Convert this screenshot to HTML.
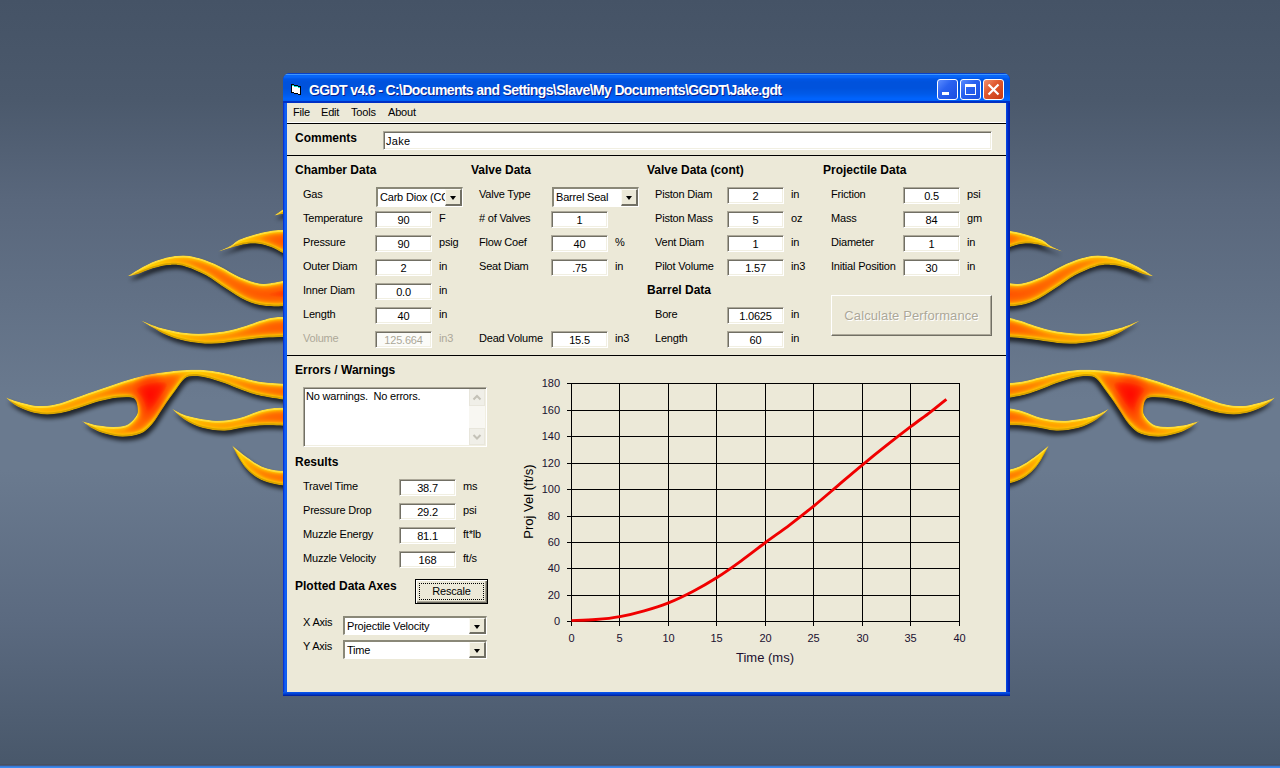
<!DOCTYPE html><html><head><meta charset="utf-8"><style>
html,body{margin:0;padding:0}
body{width:1280px;height:768px;overflow:hidden;position:relative;
background:linear-gradient(to bottom,#455366 0px,#4b596c 100px,#59677c 200px,#6a7a8f 400px,#6a7a8f 470px,#5b6a80 620px,#49586b 760px);
font-family:"Liberation Sans",sans-serif}
#taskbar{position:absolute;left:0;top:764px;width:1280px;height:4px;background:linear-gradient(to bottom,#4a505e 0px,#4a505e 1px,#425a84 1px,#425a84 2px,#3a7cd8 2px,#3a7cd8 3px,#3a8bf0 3px)}
#flames{position:absolute;left:0;top:0}
#win{position:absolute;left:283px;top:73px;width:727px;height:623px;border-radius:7px 7px 0 0;overflow:hidden;
background:linear-gradient(to right,#0019c0 0px,#0a4ee8 1px,#1466f4 3px,#0a50e8 4px,#0a50e8 723px,#0038d8 724px,#0020b0 726px)}
#wbot{position:absolute;left:0;top:619px;width:727px;height:4px;background:linear-gradient(to bottom,#0a56f0 0px,#0040d0 2px,#001a98 4px)}
#title{position:absolute;left:0;top:0;width:727px;height:30px;
background:linear-gradient(to bottom,#0841c8 0px,#0841c8 1px,#3d95ff 1px,#3d95ff 2px,#0866f8 2px,#0866f8 4px,#0056e6 6px,#0052dc 9px,#0052dc 15px,#005ae8 21px,#0064ff 26px,#0060f2 28px,#0030c4 28px,#0030c4 30px)}
#client{position:absolute;left:287px;top:103px;width:719px;height:589px;background:#ece9d8}
.t{position:absolute;font-size:11px;line-height:13px;letter-spacing:-0.2px;color:#000;white-space:nowrap}
.h{position:absolute;font-size:12px;line-height:13px;font-weight:bold;color:#000;white-space:nowrap}
.box{position:absolute;box-sizing:border-box;background:#fff;border-top:1px solid #aca899;border-left:1px solid #aca899;border-right:1px solid #fff;border-bottom:1px solid #fff;box-shadow:inset 1px 1px 0 #716f64,inset -1px -1px 0 #f1efe2;
font-size:11px;line-height:16px;letter-spacing:-0.2px;text-align:center;white-space:nowrap;overflow:hidden}
.dis{color:#aca899}
.combo{position:absolute;box-sizing:border-box;background:#fff;border-top:2px solid #8a8878;border-left:2px solid #8a8878;border-right:1px solid #fff;border-bottom:1px solid #fff;
font-size:11px;line-height:17px;letter-spacing:-0.2px;white-space:nowrap;overflow:hidden;padding-left:2px}
.cbtn{position:absolute;top:0;right:0;width:17px;bottom:0;box-sizing:border-box;background:#ece9d8;border-top:1px solid #fbfaf4;border-left:1px solid #fbfaf4;border-right:2px solid #716f64;border-bottom:2px solid #716f64}
.cbtn:after{content:"";position:absolute;left:4px;top:6px;border-left:3.5px solid transparent;border-right:3.5px solid transparent;border-top:4px solid #000}
.tbtn{position:absolute;top:6px;width:21px;height:21px;box-sizing:border-box;border:1px solid #fff;border-radius:3px;
background:linear-gradient(135deg,#5a8cff 0%,#2a62f0 40%,#1a4ee0 100%)}
.line{position:absolute;height:1px;background:#000}
</style></head><body>
<svg id="flames" width="1280" height="768" style="position:absolute;left:0;top:0"><defs><filter id="fl" x="-20%" y="-40%" width="140%" height="180%" color-interpolation-filters="sRGB"><feGaussianBlur in="SourceAlpha" stdDeviation="3" result="b1"/><feComponentTransfer in="b1" result="mid"><feFuncA type="linear" slope="2.8" intercept="-1.85"/></feComponentTransfer><feFlood flood-color="#ff8a00"/><feComposite in2="mid" operator="in" result="orange"/><feGaussianBlur in="SourceAlpha" stdDeviation="6" result="b2"/><feComponentTransfer in="b2" result="deep"><feFuncA type="linear" slope="3" intercept="-2.0"/></feComponentTransfer><feFlood flood-color="#ff5200"/><feComposite in2="deep" operator="in" result="deepor"/><feGaussianBlur in="SourceAlpha" stdDeviation="8" result="b3"/><feComponentTransfer in="b3" result="core"><feFuncA type="linear" slope="8" intercept="-6.9"/></feComponentTransfer><feFlood flood-color="#ff1000"/><feComposite in2="core" operator="in" result="red"/><feOffset in="SourceAlpha" dx="0" dy="-2" result="up"/><feComposite in="SourceAlpha" in2="up" operator="out" result="brim0"/><feGaussianBlur in="brim0" stdDeviation="0.7" result="brim1"/><feFlood flood-color="#b07a00" flood-opacity="0.5"/><feComposite in2="brim1" operator="in" result="brim"/><feOffset in="SourceAlpha" dx="0" dy="1.5" result="dn"/><feComposite in="SourceAlpha" in2="dn" operator="out" result="trim0"/><feGaussianBlur in="trim0" stdDeviation="0.6" result="trim1"/><feFlood flood-color="#ffe860" flood-opacity="0.6"/><feComposite in2="trim1" operator="in" result="trim"/><feMerge result="m"><feMergeNode in="SourceGraphic"/><feMergeNode in="orange"/><feMergeNode in="deepor"/><feMergeNode in="red"/><feMergeNode in="brim"/><feMergeNode in="trim"/></feMerge><feComposite in="m" in2="SourceAlpha" operator="in" result="fill"/><feGaussianBlur in="SourceAlpha" stdDeviation="2" result="sb"/><feOffset in="sb" dx="2" dy="3.5" result="so"/><feComponentTransfer in="so" result="sh"><feFuncA type="linear" slope="0.7"/></feComponentTransfer><feMerge><feMergeNode in="sh"/><feMergeNode in="fill"/></feMerge></filter></defs><g filter="url(#fl)" fill="#ffcc00"><path d="M274.3 215.6 C275.8 214.6 280.4 211.0 283.0 209.6 C285.6 208.2 288.8 207.8 290.0 207.4 L340 207.4 L340 214.5 L290.0 214.5 C288.8 214.4 285.6 213.8 283.0 214.0 C280.4 214.2 275.8 215.3 274.3 215.6 Z"/><path d="M218.0 251.6 C220.2 250.6 227.5 247.6 231.0 245.6 C234.5 243.6 235.1 241.7 239.0 239.8 C242.9 237.9 249.5 235.9 254.7 234.4 C259.9 232.9 264.4 231.7 270.3 230.9 C276.2 230.1 286.7 229.8 290.0 229.6 L340 229.6 L340 253.6 L290.0 253.6 C288.8 253.5 285.6 254.0 283.0 253.1 C280.4 252.2 277.6 249.8 274.2 248.4 C270.8 247.0 266.0 245.3 262.5 244.5 C259.0 243.7 256.2 243.4 253.0 243.4 C249.8 243.4 246.6 243.8 243.0 244.5 C239.4 245.2 235.4 246.5 231.2 247.7 C227.1 248.9 220.2 250.9 218.0 251.6 Z"/><path d="M127.3 276.2 C130.5 274.3 140.1 268.0 146.6 264.9 C153.1 261.8 160.3 259.2 166.5 257.6 C172.7 256.0 178.2 255.3 183.7 255.4 C189.2 255.5 193.7 256.5 199.7 258.3 C205.7 260.1 213.0 263.1 219.6 266.2 C226.2 269.3 232.9 274.0 239.5 276.9 C246.1 279.8 253.9 282.5 259.4 283.5 C264.9 284.5 267.6 283.5 272.7 282.8 C277.8 282.1 287.1 280.1 290.0 279.5 L340 279.5 L340 306.0 L290.0 306.0 C286.0 306.0 273.3 307.0 266.0 306.1 C258.7 305.2 252.8 303.7 246.2 300.8 C239.6 297.9 232.8 293.0 226.2 288.8 C219.5 284.6 212.9 279.1 206.3 275.5 C199.7 271.9 192.4 268.7 186.4 266.9 C180.4 265.1 176.0 264.7 170.5 264.9 C165.0 265.1 158.7 266.6 153.2 268.2 C147.7 269.8 141.6 272.9 137.3 274.2 C133.0 275.5 129.0 275.9 127.3 276.2 Z"/><path d="M140.0 320.0 C143.5 321.4 153.5 325.9 161.2 328.1 C169.0 330.3 177.9 332.3 186.2 333.1 C194.6 333.9 202.9 333.8 211.2 333.1 C219.6 332.4 227.9 330.8 236.2 328.8 C244.6 326.7 255.0 322.5 261.2 320.6 C267.5 318.7 269.0 318.1 273.8 317.5 C278.5 316.9 287.3 316.9 290.0 316.8 L340 316.8 L340 336.8 L290.0 336.8 C285.2 337.0 270.2 337.4 261.2 338.1 C252.3 338.8 244.6 340.3 236.2 341.2 C227.9 342.2 219.6 343.8 211.2 343.8 C202.9 343.8 193.5 342.6 186.2 341.2 C179.0 339.9 173.1 337.9 167.5 335.6 C161.9 333.3 157.1 330.1 152.5 327.5 C147.9 324.9 142.1 321.2 140.0 320.0 Z"/><path d="M5.9 397.5 C7.9 398.2 12.7 400.2 17.6 401.6 C22.5 403.0 29.4 405.1 35.2 405.7 C41.1 406.3 46.9 406.1 52.7 405.1 C58.6 404.1 63.5 402.1 70.3 399.8 C77.1 397.6 85.6 394.3 93.4 391.6 C101.2 388.9 109.1 385.9 116.9 383.4 C124.7 380.9 132.5 378.2 140.3 376.4 C148.1 374.5 155.9 373.4 163.8 372.3 C171.6 371.2 180.1 370.3 187.2 370.0 C194.3 369.7 200.2 369.8 206.5 370.3 C212.8 370.8 218.6 371.9 224.7 373.2 C230.8 374.4 236.9 376.3 243.0 377.8 C249.1 379.3 253.4 381.0 261.2 382.0 C269.0 383.0 285.2 383.7 290.0 384.0 L340 384.0 L340 400.5 L290.0 400.5 C285.2 399.8 269.0 397.6 261.2 396.0 C253.4 394.4 249.1 392.7 243.0 390.6 C236.9 388.5 230.8 385.4 224.7 383.3 C218.6 381.2 211.7 379.0 206.5 377.8 C201.3 376.6 197.3 375.9 193.7 376.0 C190.0 376.1 187.6 376.3 184.6 378.7 C181.6 381.1 179.0 385.8 175.5 390.5 C172.0 395.2 167.7 401.2 163.8 406.9 C159.8 412.6 155.9 420.0 152.0 424.5 C148.1 429.0 145.2 431.8 140.3 433.8 C135.4 435.9 128.6 436.8 122.7 436.8 C116.8 436.8 110.1 435.1 105.2 433.8 C100.3 432.5 97.3 431.2 93.4 429.1 C89.5 427.0 83.7 422.3 81.7 420.9 L81.7 420.9 C84.6 421.7 93.4 424.6 99.3 425.6 C105.2 426.6 112.0 427.1 116.9 426.8 C121.8 426.5 125.3 425.8 128.6 423.9 C131.9 421.9 135.3 417.9 136.8 415.1 C138.3 412.3 137.6 409.3 137.4 406.9 C137.2 404.4 136.7 402.0 135.6 400.4 C134.5 398.8 134.0 397.9 130.9 397.5 C127.8 397.1 122.4 397.2 117.2 397.8 C112.0 398.4 105.5 399.8 99.6 401.3 C93.7 402.8 87.8 405.1 82.0 406.9 C76.2 408.7 70.3 410.9 64.5 412.2 C58.6 413.5 52.8 414.6 46.9 414.5 C41.0 414.4 34.8 413.3 29.3 411.6 C23.8 409.9 18.0 406.9 14.1 404.5 C10.2 402.1 7.3 398.7 5.9 397.5 Z"/><path d="M171.8 408.8 C174.5 410.0 180.9 414.1 188.2 416.1 C195.5 418.1 207.1 420.4 215.6 420.7 C224.1 421.0 232.3 419.4 239.3 417.9 C246.3 416.4 252.0 413.1 257.5 411.5 C263.0 409.9 266.7 408.9 272.1 408.3 C277.5 407.7 287.0 407.9 290.0 407.8 L340 407.8 L340 426.0 L290.0 426.0 C285.8 425.9 272.0 425.0 264.8 425.2 C257.6 425.4 253.3 426.1 246.6 427.0 C239.9 427.9 232.0 430.5 224.7 430.7 C217.4 430.9 209.5 429.8 202.8 428.0 C196.1 426.2 189.8 422.9 184.6 419.7 C179.4 416.5 173.9 410.6 171.8 408.8 Z"/><path d="M232.0 445.3 C234.4 447.3 241.7 453.6 246.6 457.1 C251.5 460.6 256.6 464.2 261.2 466.3 C265.8 468.4 269.2 469.1 274.0 469.9 C278.8 470.7 287.3 470.8 290.0 471.0 L340 471.0 L340 486.5 L290.0 486.5 C287.0 486.0 277.5 485.0 272.1 483.6 C266.7 482.2 261.8 480.5 257.5 478.1 C253.2 475.7 249.6 472.2 246.6 469.0 C243.6 465.8 241.7 462.9 239.3 459.0 C236.9 455.1 233.2 447.6 232.0 445.3 Z"/></g><defs><radialGradient id="rc" gradientUnits="userSpaceOnUse" cx="150" cy="395" r="24" gradientTransform="translate(150 395) scale(0.8 1.2) translate(-150 -395)"><stop offset="0" stop-color="#ff0800" stop-opacity="0.75"/><stop offset="0.55" stop-color="#ff1800" stop-opacity="0.4"/><stop offset="1" stop-color="#ff3000" stop-opacity="0"/></radialGradient></defs><path d="M5.9 397.5 C7.9 398.2 12.7 400.2 17.6 401.6 C22.5 403.0 29.4 405.1 35.2 405.7 C41.1 406.3 46.9 406.1 52.7 405.1 C58.6 404.1 63.5 402.1 70.3 399.8 C77.1 397.6 85.6 394.3 93.4 391.6 C101.2 388.9 109.1 385.9 116.9 383.4 C124.7 380.9 132.5 378.2 140.3 376.4 C148.1 374.5 155.9 373.4 163.8 372.3 C171.6 371.2 180.1 370.3 187.2 370.0 C194.3 369.7 200.2 369.8 206.5 370.3 C212.8 370.8 218.6 371.9 224.7 373.2 C230.8 374.4 236.9 376.3 243.0 377.8 C249.1 379.3 253.4 381.0 261.2 382.0 C269.0 383.0 285.2 383.7 290.0 384.0 L340 384.0 L340 400.5 L290.0 400.5 C285.2 399.8 269.0 397.6 261.2 396.0 C253.4 394.4 249.1 392.7 243.0 390.6 C236.9 388.5 230.8 385.4 224.7 383.3 C218.6 381.2 211.7 379.0 206.5 377.8 C201.3 376.6 197.3 375.9 193.7 376.0 C190.0 376.1 187.6 376.3 184.6 378.7 C181.6 381.1 179.0 385.8 175.5 390.5 C172.0 395.2 167.7 401.2 163.8 406.9 C159.8 412.6 155.9 420.0 152.0 424.5 C148.1 429.0 145.2 431.8 140.3 433.8 C135.4 435.9 128.6 436.8 122.7 436.8 C116.8 436.8 110.1 435.1 105.2 433.8 C100.3 432.5 97.3 431.2 93.4 429.1 C89.5 427.0 83.7 422.3 81.7 420.9 L81.7 420.9 C84.6 421.7 93.4 424.6 99.3 425.6 C105.2 426.6 112.0 427.1 116.9 426.8 C121.8 426.5 125.3 425.8 128.6 423.9 C131.9 421.9 135.3 417.9 136.8 415.1 C138.3 412.3 137.6 409.3 137.4 406.9 C137.2 404.4 136.7 402.0 135.6 400.4 C134.5 398.8 134.0 397.9 130.9 397.5 C127.8 397.1 122.4 397.2 117.2 397.8 C112.0 398.4 105.5 399.8 99.6 401.3 C93.7 402.8 87.8 405.1 82.0 406.9 C76.2 408.7 70.3 410.9 64.5 412.2 C58.6 413.5 52.8 414.6 46.9 414.5 C41.0 414.4 34.8 413.3 29.3 411.6 C23.8 409.9 18.0 406.9 14.1 404.5 C10.2 402.1 7.3 398.7 5.9 397.5 Z" fill="url(#rc)"/><g transform="translate(1281,0) scale(-1,1)"><g filter="url(#fl)" fill="#ffcc00"><path d="M274.3 215.6 C275.8 214.6 280.4 211.0 283.0 209.6 C285.6 208.2 288.8 207.8 290.0 207.4 L340 207.4 L340 214.5 L290.0 214.5 C288.8 214.4 285.6 213.8 283.0 214.0 C280.4 214.2 275.8 215.3 274.3 215.6 Z"/><path d="M218.0 251.6 C220.2 250.6 227.5 247.6 231.0 245.6 C234.5 243.6 235.1 241.7 239.0 239.8 C242.9 237.9 249.5 235.9 254.7 234.4 C259.9 232.9 264.4 231.7 270.3 230.9 C276.2 230.1 286.7 229.8 290.0 229.6 L340 229.6 L340 253.6 L290.0 253.6 C288.8 253.5 285.6 254.0 283.0 253.1 C280.4 252.2 277.6 249.8 274.2 248.4 C270.8 247.0 266.0 245.3 262.5 244.5 C259.0 243.7 256.2 243.4 253.0 243.4 C249.8 243.4 246.6 243.8 243.0 244.5 C239.4 245.2 235.4 246.5 231.2 247.7 C227.1 248.9 220.2 250.9 218.0 251.6 Z"/><path d="M127.3 276.2 C130.5 274.3 140.1 268.0 146.6 264.9 C153.1 261.8 160.3 259.2 166.5 257.6 C172.7 256.0 178.2 255.3 183.7 255.4 C189.2 255.5 193.7 256.5 199.7 258.3 C205.7 260.1 213.0 263.1 219.6 266.2 C226.2 269.3 232.9 274.0 239.5 276.9 C246.1 279.8 253.9 282.5 259.4 283.5 C264.9 284.5 267.6 283.5 272.7 282.8 C277.8 282.1 287.1 280.1 290.0 279.5 L340 279.5 L340 306.0 L290.0 306.0 C286.0 306.0 273.3 307.0 266.0 306.1 C258.7 305.2 252.8 303.7 246.2 300.8 C239.6 297.9 232.8 293.0 226.2 288.8 C219.5 284.6 212.9 279.1 206.3 275.5 C199.7 271.9 192.4 268.7 186.4 266.9 C180.4 265.1 176.0 264.7 170.5 264.9 C165.0 265.1 158.7 266.6 153.2 268.2 C147.7 269.8 141.6 272.9 137.3 274.2 C133.0 275.5 129.0 275.9 127.3 276.2 Z"/><path d="M140.0 320.0 C143.5 321.4 153.5 325.9 161.2 328.1 C169.0 330.3 177.9 332.3 186.2 333.1 C194.6 333.9 202.9 333.8 211.2 333.1 C219.6 332.4 227.9 330.8 236.2 328.8 C244.6 326.7 255.0 322.5 261.2 320.6 C267.5 318.7 269.0 318.1 273.8 317.5 C278.5 316.9 287.3 316.9 290.0 316.8 L340 316.8 L340 336.8 L290.0 336.8 C285.2 337.0 270.2 337.4 261.2 338.1 C252.3 338.8 244.6 340.3 236.2 341.2 C227.9 342.2 219.6 343.8 211.2 343.8 C202.9 343.8 193.5 342.6 186.2 341.2 C179.0 339.9 173.1 337.9 167.5 335.6 C161.9 333.3 157.1 330.1 152.5 327.5 C147.9 324.9 142.1 321.2 140.0 320.0 Z"/><path d="M5.9 397.5 C7.9 398.2 12.7 400.2 17.6 401.6 C22.5 403.0 29.4 405.1 35.2 405.7 C41.1 406.3 46.9 406.1 52.7 405.1 C58.6 404.1 63.5 402.1 70.3 399.8 C77.1 397.6 85.6 394.3 93.4 391.6 C101.2 388.9 109.1 385.9 116.9 383.4 C124.7 380.9 132.5 378.2 140.3 376.4 C148.1 374.5 155.9 373.4 163.8 372.3 C171.6 371.2 180.1 370.3 187.2 370.0 C194.3 369.7 200.2 369.8 206.5 370.3 C212.8 370.8 218.6 371.9 224.7 373.2 C230.8 374.4 236.9 376.3 243.0 377.8 C249.1 379.3 253.4 381.0 261.2 382.0 C269.0 383.0 285.2 383.7 290.0 384.0 L340 384.0 L340 400.5 L290.0 400.5 C285.2 399.8 269.0 397.6 261.2 396.0 C253.4 394.4 249.1 392.7 243.0 390.6 C236.9 388.5 230.8 385.4 224.7 383.3 C218.6 381.2 211.7 379.0 206.5 377.8 C201.3 376.6 197.3 375.9 193.7 376.0 C190.0 376.1 187.6 376.3 184.6 378.7 C181.6 381.1 179.0 385.8 175.5 390.5 C172.0 395.2 167.7 401.2 163.8 406.9 C159.8 412.6 155.9 420.0 152.0 424.5 C148.1 429.0 145.2 431.8 140.3 433.8 C135.4 435.9 128.6 436.8 122.7 436.8 C116.8 436.8 110.1 435.1 105.2 433.8 C100.3 432.5 97.3 431.2 93.4 429.1 C89.5 427.0 83.7 422.3 81.7 420.9 L81.7 420.9 C84.6 421.7 93.4 424.6 99.3 425.6 C105.2 426.6 112.0 427.1 116.9 426.8 C121.8 426.5 125.3 425.8 128.6 423.9 C131.9 421.9 135.3 417.9 136.8 415.1 C138.3 412.3 137.6 409.3 137.4 406.9 C137.2 404.4 136.7 402.0 135.6 400.4 C134.5 398.8 134.0 397.9 130.9 397.5 C127.8 397.1 122.4 397.2 117.2 397.8 C112.0 398.4 105.5 399.8 99.6 401.3 C93.7 402.8 87.8 405.1 82.0 406.9 C76.2 408.7 70.3 410.9 64.5 412.2 C58.6 413.5 52.8 414.6 46.9 414.5 C41.0 414.4 34.8 413.3 29.3 411.6 C23.8 409.9 18.0 406.9 14.1 404.5 C10.2 402.1 7.3 398.7 5.9 397.5 Z"/><path d="M171.8 408.8 C174.5 410.0 180.9 414.1 188.2 416.1 C195.5 418.1 207.1 420.4 215.6 420.7 C224.1 421.0 232.3 419.4 239.3 417.9 C246.3 416.4 252.0 413.1 257.5 411.5 C263.0 409.9 266.7 408.9 272.1 408.3 C277.5 407.7 287.0 407.9 290.0 407.8 L340 407.8 L340 426.0 L290.0 426.0 C285.8 425.9 272.0 425.0 264.8 425.2 C257.6 425.4 253.3 426.1 246.6 427.0 C239.9 427.9 232.0 430.5 224.7 430.7 C217.4 430.9 209.5 429.8 202.8 428.0 C196.1 426.2 189.8 422.9 184.6 419.7 C179.4 416.5 173.9 410.6 171.8 408.8 Z"/><path d="M232.0 445.3 C234.4 447.3 241.7 453.6 246.6 457.1 C251.5 460.6 256.6 464.2 261.2 466.3 C265.8 468.4 269.2 469.1 274.0 469.9 C278.8 470.7 287.3 470.8 290.0 471.0 L340 471.0 L340 486.5 L290.0 486.5 C287.0 486.0 277.5 485.0 272.1 483.6 C266.7 482.2 261.8 480.5 257.5 478.1 C253.2 475.7 249.6 472.2 246.6 469.0 C243.6 465.8 241.7 462.9 239.3 459.0 C236.9 455.1 233.2 447.6 232.0 445.3 Z"/></g><path d="M5.9 397.5 C7.9 398.2 12.7 400.2 17.6 401.6 C22.5 403.0 29.4 405.1 35.2 405.7 C41.1 406.3 46.9 406.1 52.7 405.1 C58.6 404.1 63.5 402.1 70.3 399.8 C77.1 397.6 85.6 394.3 93.4 391.6 C101.2 388.9 109.1 385.9 116.9 383.4 C124.7 380.9 132.5 378.2 140.3 376.4 C148.1 374.5 155.9 373.4 163.8 372.3 C171.6 371.2 180.1 370.3 187.2 370.0 C194.3 369.7 200.2 369.8 206.5 370.3 C212.8 370.8 218.6 371.9 224.7 373.2 C230.8 374.4 236.9 376.3 243.0 377.8 C249.1 379.3 253.4 381.0 261.2 382.0 C269.0 383.0 285.2 383.7 290.0 384.0 L340 384.0 L340 400.5 L290.0 400.5 C285.2 399.8 269.0 397.6 261.2 396.0 C253.4 394.4 249.1 392.7 243.0 390.6 C236.9 388.5 230.8 385.4 224.7 383.3 C218.6 381.2 211.7 379.0 206.5 377.8 C201.3 376.6 197.3 375.9 193.7 376.0 C190.0 376.1 187.6 376.3 184.6 378.7 C181.6 381.1 179.0 385.8 175.5 390.5 C172.0 395.2 167.7 401.2 163.8 406.9 C159.8 412.6 155.9 420.0 152.0 424.5 C148.1 429.0 145.2 431.8 140.3 433.8 C135.4 435.9 128.6 436.8 122.7 436.8 C116.8 436.8 110.1 435.1 105.2 433.8 C100.3 432.5 97.3 431.2 93.4 429.1 C89.5 427.0 83.7 422.3 81.7 420.9 L81.7 420.9 C84.6 421.7 93.4 424.6 99.3 425.6 C105.2 426.6 112.0 427.1 116.9 426.8 C121.8 426.5 125.3 425.8 128.6 423.9 C131.9 421.9 135.3 417.9 136.8 415.1 C138.3 412.3 137.6 409.3 137.4 406.9 C137.2 404.4 136.7 402.0 135.6 400.4 C134.5 398.8 134.0 397.9 130.9 397.5 C127.8 397.1 122.4 397.2 117.2 397.8 C112.0 398.4 105.5 399.8 99.6 401.3 C93.7 402.8 87.8 405.1 82.0 406.9 C76.2 408.7 70.3 410.9 64.5 412.2 C58.6 413.5 52.8 414.6 46.9 414.5 C41.0 414.4 34.8 413.3 29.3 411.6 C23.8 409.9 18.0 406.9 14.1 404.5 C10.2 402.1 7.3 398.7 5.9 397.5 Z" fill="url(#rc)"/></g></svg>
<div id="taskbar"></div>
<div id="win"><div id="title"></div><div id="wbot"></div>
<div class="tbtn" style="left:654px"><div style="position:absolute;left:4px;top:12px;width:7px;height:3px;background:#fff"></div></div>
<div class="tbtn" style="left:677px"><div style="position:absolute;left:4px;top:4px;width:11px;height:11px;box-sizing:border-box;border:1px solid #fff;border-top-width:3px"></div></div>
<div class="tbtn" style="left:700px;background:linear-gradient(135deg,#f09070 0%,#e05a30 40%,#c83810 100%)"><svg width="19" height="19" style="position:absolute;left:0;top:0"><path d="M4.5 4.5L14.5 14.5M14.5 4.5L4.5 14.5" stroke="#fff" stroke-width="2.2"/></svg></div>
<svg style="position:absolute;left:8px;top:11px" width="11" height="12" shape-rendering="crispEdges"><rect x="1" y="2" width="2" height="6" fill="#fff"/><rect x="3" y="3" width="4" height="6" fill="#fff"/><rect x="7" y="4" width="2" height="6" fill="#fff"/><rect x="1" y="1" width="2" height="1" fill="#00e8e0"/><rect x="3" y="2" width="4" height="1" fill="#00e8e0"/><rect x="7" y="3" width="2" height="1" fill="#00e8e0"/><rect x="0" y="0" width="3" height="1" fill="#000"/><rect x="3" y="1" width="4" height="1" fill="#000"/><rect x="7" y="2" width="3" height="1" fill="#000"/><rect x="0" y="0" width="1" height="9" fill="#000"/><rect x="9" y="2" width="1" height="9" fill="#000"/><rect x="0" y="8" width="3" height="1" fill="#000"/><rect x="3" y="9" width="4" height="1" fill="#000"/><rect x="7" y="10" width="3" height="1" fill="#000"/></svg>
<div style="position:absolute;left:26px;top:9px;font-size:14px;line-height:17px;font-weight:bold;color:#fff;letter-spacing:-0.62px;white-space:nowrap;text-shadow:1px 1px 0 #0a1e8a">GGDT v4.6 - C:\Documents and Settings\Slave\My Documents\GGDT\Jake.gdt</div>
</div>
<div id="client"></div>
<div class="t" style="left:293px;top:106px;">File</div>
<div class="t" style="left:321px;top:106px;">Edit</div>
<div class="t" style="left:351px;top:106px;">Tools</div>
<div class="t" style="left:388px;top:106px;">About</div>
<div class="line" style="left:287px;top:122px;width:719px;background:#fff"></div>
<div class="line" style="left:287px;top:123px;width:719px"></div>
<div class="h" style="left:295px;top:132px;">Comments</div>
<div class="box" style="left:383px;top:131px;width:609px;height:19px;text-align:left;padding-left:2px;line-height:19px;letter-spacing:0.3px">Jake</div>
<div class="line" style="left:287px;top:155px;width:719px"></div>
<div class="h" style="left:295px;top:164px;">Chamber Data</div>
<div class="h" style="left:471px;top:164px;">Valve Data</div>
<div class="h" style="left:647px;top:164px;">Valve Data (cont)</div>
<div class="h" style="left:823px;top:164px;">Projectile Data</div>
<div class="combo" style="left:376px;top:187px;width:87px;height:20px">Carb Diox (CC<div class="cbtn"></div></div>
<div class="t" style="left:303px;top:188px;">Gas</div>
<div class="t" style="left:303px;top:212px;">Temperature</div>
<div class="box" style="left:375px;top:211px;width:57px;height:17px;">90</div>
<div class="t" style="left:439px;top:212px;">F</div>
<div class="t" style="left:303px;top:236px;">Pressure</div>
<div class="box" style="left:375px;top:235px;width:57px;height:17px;">90</div>
<div class="t" style="left:439px;top:236px;">psig</div>
<div class="t" style="left:303px;top:260px;">Outer Diam</div>
<div class="box" style="left:375px;top:259px;width:57px;height:17px;">2</div>
<div class="t" style="left:439px;top:260px;">in</div>
<div class="t" style="left:303px;top:284px;">Inner Diam</div>
<div class="box" style="left:375px;top:283px;width:57px;height:17px;">0.0</div>
<div class="t" style="left:439px;top:284px;">in</div>
<div class="t" style="left:303px;top:308px;">Length</div>
<div class="box" style="left:375px;top:307px;width:57px;height:17px;">40</div>
<div class="t" style="left:439px;top:308px;">in</div>
<div class="t dis" style="left:303px;top:332px;">Volume</div>
<div class="box" style="left:375px;top:331px;width:57px;height:17px;color:#aca899;background:#fbfbf8">125.664</div>
<div class="t dis" style="left:439px;top:332px;">in3</div>
<div class="t" style="left:479px;top:188px;">Valve Type</div>
<div class="combo" style="left:552px;top:187px;width:87px;height:20px">Barrel Seal<div class="cbtn"></div></div>
<div class="t" style="left:479px;top:212px;"># of Valves</div>
<div class="box" style="left:551px;top:211px;width:57px;height:17px;">1</div>
<div class="t" style="left:615px;top:212px;"></div>
<div class="t" style="left:479px;top:236px;">Flow Coef</div>
<div class="box" style="left:551px;top:235px;width:57px;height:17px;">40</div>
<div class="t" style="left:615px;top:236px;">%</div>
<div class="t" style="left:479px;top:260px;">Seat Diam</div>
<div class="box" style="left:551px;top:259px;width:57px;height:17px;">.75</div>
<div class="t" style="left:615px;top:260px;">in</div>
<div class="t" style="left:479px;top:332px;">Dead Volume</div>
<div class="box" style="left:551px;top:331px;width:57px;height:17px;">15.5</div>
<div class="t" style="left:615px;top:332px;">in3</div>
<div class="t" style="left:655px;top:188px;">Piston Diam</div>
<div class="box" style="left:727px;top:187px;width:57px;height:17px;">2</div>
<div class="t" style="left:791px;top:188px;">in</div>
<div class="t" style="left:655px;top:212px;">Piston Mass</div>
<div class="box" style="left:727px;top:211px;width:57px;height:17px;">5</div>
<div class="t" style="left:791px;top:212px;">oz</div>
<div class="t" style="left:655px;top:236px;">Vent Diam</div>
<div class="box" style="left:727px;top:235px;width:57px;height:17px;">1</div>
<div class="t" style="left:791px;top:236px;">in</div>
<div class="t" style="left:655px;top:260px;">Pilot Volume</div>
<div class="box" style="left:727px;top:259px;width:57px;height:17px;">1.57</div>
<div class="t" style="left:791px;top:260px;">in3</div>
<div class="h" style="left:647px;top:284px;">Barrel Data</div>
<div class="t" style="left:655px;top:308px;">Bore</div>
<div class="box" style="left:727px;top:307px;width:57px;height:17px;">1.0625</div>
<div class="t" style="left:791px;top:308px;">in</div>
<div class="t" style="left:655px;top:332px;">Length</div>
<div class="box" style="left:727px;top:331px;width:57px;height:17px;">60</div>
<div class="t" style="left:791px;top:332px;">in</div>
<div class="t" style="left:831px;top:188px;">Friction</div>
<div class="box" style="left:903px;top:187px;width:57px;height:17px;">0.5</div>
<div class="t" style="left:967px;top:188px;">psi</div>
<div class="t" style="left:831px;top:212px;">Mass</div>
<div class="box" style="left:903px;top:211px;width:57px;height:17px;">84</div>
<div class="t" style="left:967px;top:212px;">gm</div>
<div class="t" style="left:831px;top:236px;">Diameter</div>
<div class="box" style="left:903px;top:235px;width:57px;height:17px;">1</div>
<div class="t" style="left:967px;top:236px;">in</div>
<div class="t" style="left:831px;top:260px;">Initial Position</div>
<div class="box" style="left:903px;top:259px;width:57px;height:17px;">30</div>
<div class="t" style="left:967px;top:260px;">in</div>
<div style="position:absolute;left:831px;top:295px;width:161px;height:41px;box-sizing:border-box;border-top:1px solid #fff;border-left:1px solid #fff;border-right:1px solid #716f64;border-bottom:1px solid #716f64;box-shadow:inset -1px -1px 0 #aca899;background:#ece9d8;font-size:13px;line-height:39px;letter-spacing:0.1px;text-align:center;color:#aca899;white-space:nowrap;text-shadow:1px 1px 0 #fff">Calculate Performance</div>
<div class="line" style="left:287px;top:355px;width:719px"></div>
<div class="h" style="left:295px;top:364px;">Errors / Warnings</div>
<div class="box" style="left:303px;top:387px;width:184px;height:60px;text-align:left;padding-left:2px;line-height:17px">No warnings.&nbsp; No errors.<div style="position:absolute;right:1px;top:1px;width:16px;bottom:1px;background:#f8f7f2"><div style="position:absolute;left:0;top:0;width:16px;height:17px;box-sizing:border-box;border:1px solid #e8e6dc;background:#f0efe8"><svg width="14" height="15" style="position:absolute;left:0;top:0"><path d="M3.5 9.5L7 6L10.5 9.5" fill="none" stroke="#c4c2b8" stroke-width="2"/></svg></div><div style="position:absolute;left:0;bottom:0;width:16px;height:17px;box-sizing:border-box;border:1px solid #e8e6dc;background:#f0efe8"><svg width="14" height="15" style="position:absolute;left:0;top:0"><path d="M3.5 6L7 9.5L10.5 6" fill="none" stroke="#c4c2b8" stroke-width="2"/></svg></div></div></div>
<div class="h" style="left:295px;top:456px;">Results</div>
<div class="t" style="left:303px;top:480px;">Travel Time</div>
<div class="box" style="left:399px;top:479px;width:57px;height:17px;">38.7</div>
<div class="t" style="left:463px;top:480px;">ms</div>
<div class="t" style="left:303px;top:504px;">Pressure Drop</div>
<div class="box" style="left:399px;top:503px;width:57px;height:17px;">29.2</div>
<div class="t" style="left:463px;top:504px;">psi</div>
<div class="t" style="left:303px;top:528px;">Muzzle Energy</div>
<div class="box" style="left:399px;top:527px;width:57px;height:17px;">81.1</div>
<div class="t" style="left:463px;top:528px;">ft*lb</div>
<div class="t" style="left:303px;top:552px;">Muzzle Velocity</div>
<div class="box" style="left:399px;top:551px;width:57px;height:17px;">168</div>
<div class="t" style="left:463px;top:552px;">ft/s</div>
<div class="h" style="left:295px;top:580px;">Plotted Data Axes</div>
<div style="position:absolute;left:415px;top:579px;width:73px;height:25px;box-sizing:border-box;border:1px solid #000;background:#ece9d8;box-shadow:inset 1px 1px 0 #fff,inset -1px -1px 0 #716f64,inset -2px -2px 0 #aca899;font-size:11px;line-height:23px;text-align:center;letter-spacing:-0.2px"><div style="position:absolute;left:3px;top:3px;right:3px;bottom:3px;border:1px dotted #000"></div>Rescale</div>
<div class="t" style="left:303px;top:616px;">X Axis</div>
<div class="combo" style="left:343px;top:616px;width:144px;height:19px">Projectile Velocity<div class="cbtn"></div></div>
<div class="t" style="left:303px;top:640px;">Y Axis</div>
<div class="combo" style="left:343px;top:640px;width:144px;height:19px">Time<div class="cbtn"></div></div>
<svg style="position:absolute;left:0;top:0" width="1280" height="768"><rect x="571" y="383" width="1" height="243" fill="#000"/><rect x="619" y="383" width="1" height="243" fill="#000"/><rect x="668" y="383" width="1" height="243" fill="#000"/><rect x="716" y="383" width="1" height="243" fill="#000"/><rect x="765" y="383" width="1" height="243" fill="#000"/><rect x="813" y="383" width="1" height="243" fill="#000"/><rect x="862" y="383" width="1" height="243" fill="#000"/><rect x="910" y="383" width="1" height="243" fill="#000"/><rect x="959" y="383" width="1" height="243" fill="#000"/><rect x="567" y="621" width="393" height="1" fill="#000"/><rect x="567" y="595" width="393" height="1" fill="#000"/><rect x="567" y="568" width="393" height="1" fill="#000"/><rect x="567" y="542" width="393" height="1" fill="#000"/><rect x="567" y="516" width="393" height="1" fill="#000"/><rect x="567" y="489" width="393" height="1" fill="#000"/><rect x="567" y="463" width="393" height="1" fill="#000"/><rect x="567" y="436" width="393" height="1" fill="#000"/><rect x="567" y="410" width="393" height="1" fill="#000"/><rect x="567" y="383" width="393" height="1" fill="#000"/><path d="M571.5 620.6 C575.5 620.4 587.7 620.2 595.8 619.5 C603.8 618.9 611.9 618.1 620.0 616.6 C628.1 615.2 636.2 613.2 644.2 610.9 C652.3 608.6 660.4 606.1 668.5 602.9 C676.6 599.6 684.7 595.7 692.8 591.5 C700.8 587.3 708.9 582.6 717.0 577.5 C725.1 572.4 733.2 566.6 741.2 560.8 C749.3 555.0 757.4 548.5 765.5 542.5 C773.6 536.5 781.7 530.9 789.8 524.8 C797.8 518.7 805.9 512.4 814.0 505.8 C822.1 499.2 830.2 492.1 838.2 485.3 C846.3 478.4 854.4 471.4 862.5 464.8 C870.6 458.1 878.7 451.6 886.8 445.2 C894.8 438.8 903.7 431.9 911.0 426.4 C918.3 420.9 924.5 416.6 930.4 412.1 C936.3 407.6 943.7 401.4 946.4 399.3" fill="none" stroke="#f00000" stroke-width="2.9" stroke-linejoin="round"/></svg>
<div class="t" style="left:520px;width:40px;text-align:right;top:615.0px;color:#201030;letter-spacing:0">0</div>
<div class="t" style="left:520px;width:40px;text-align:right;top:589.0px;color:#201030;letter-spacing:0">20</div>
<div class="t" style="left:520px;width:40px;text-align:right;top:562.0px;color:#201030;letter-spacing:0">40</div>
<div class="t" style="left:520px;width:40px;text-align:right;top:536.0px;color:#201030;letter-spacing:0">60</div>
<div class="t" style="left:520px;width:40px;text-align:right;top:510.0px;color:#201030;letter-spacing:0">80</div>
<div class="t" style="left:520px;width:40px;text-align:right;top:483.0px;color:#201030;letter-spacing:0">100</div>
<div class="t" style="left:520px;width:40px;text-align:right;top:457.0px;color:#201030;letter-spacing:0">120</div>
<div class="t" style="left:520px;width:40px;text-align:right;top:430.0px;color:#201030;letter-spacing:0">140</div>
<div class="t" style="left:520px;width:40px;text-align:right;top:404.0px;color:#201030;letter-spacing:0">160</div>
<div class="t" style="left:520px;width:40px;text-align:right;top:377.0px;color:#201030;letter-spacing:0">180</div>
<div class="t" style="left:551.5px;width:40px;text-align:center;top:632px;color:#201030;letter-spacing:0">0</div>
<div class="t" style="left:599.5px;width:40px;text-align:center;top:632px;color:#201030;letter-spacing:0">5</div>
<div class="t" style="left:648.5px;width:40px;text-align:center;top:632px;color:#201030;letter-spacing:0">10</div>
<div class="t" style="left:696.5px;width:40px;text-align:center;top:632px;color:#201030;letter-spacing:0">15</div>
<div class="t" style="left:745.5px;width:40px;text-align:center;top:632px;color:#201030;letter-spacing:0">20</div>
<div class="t" style="left:793.5px;width:40px;text-align:center;top:632px;color:#201030;letter-spacing:0">25</div>
<div class="t" style="left:842.5px;width:40px;text-align:center;top:632px;color:#201030;letter-spacing:0">30</div>
<div class="t" style="left:890.5px;width:40px;text-align:center;top:632px;color:#201030;letter-spacing:0">35</div>
<div class="t" style="left:939.5px;width:40px;text-align:center;top:632px;color:#201030;letter-spacing:0">40</div>
<div class="t" style="left:736px;top:650px;font-size:13px;line-height:15px;color:#201030;letter-spacing:0">Time (ms)</div>
<div class="t" style="left:491px;top:494px;width:75px;text-align:center;font-size:13px;line-height:15px;color:#000;letter-spacing:0;transform:rotate(-90deg)">Proj Vel (ft/s)</div>
</body></html>
